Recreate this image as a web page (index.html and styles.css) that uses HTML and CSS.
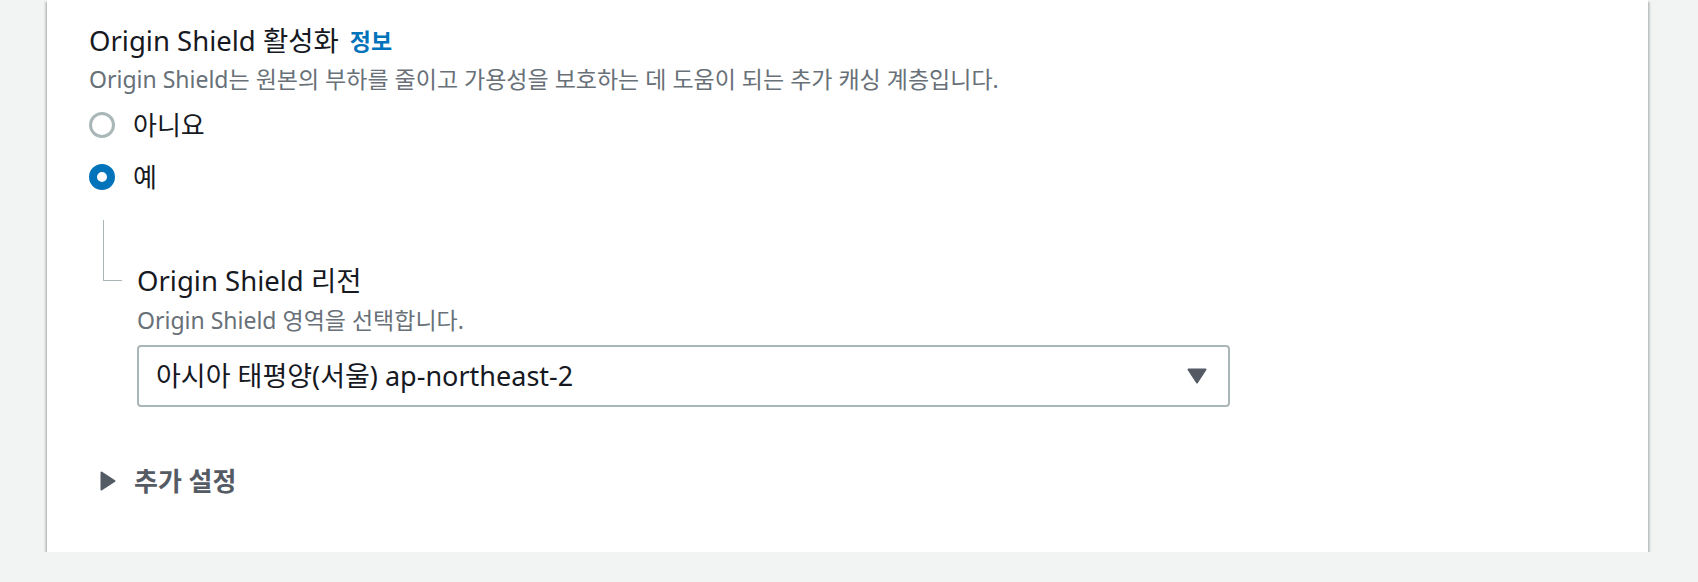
FILE: index.html
```html
<!DOCTYPE html>
<html lang="ko">
<head>
<meta charset="utf-8">
<title>Origin Shield</title>
<link rel="stylesheet" href="styles.css">
</head>
<body>
<div class="card">
  <div class="field-title">
    <span class="label">Origin Shield 활성화</span>
    <a class="info" href="#">정보</a>
  </div>
  <div class="desc">Origin Shield는 원본의 부하를 줄이고 가용성을 보호하는 데 도움이 되는 추가 캐싱 계층입니다.</div>
  <div class="radios">
    <label class="radio-row"><span class="radio"></span><span class="radio-text">아니요</span></label>
    <label class="radio-row"><span class="radio checked"></span><span class="radio-text">예</span></label>
  </div>
  <div class="nested">
    <div class="connector"></div>
    <div class="nested-body">
      <div class="label">Origin Shield 리전</div>
      <div class="desc">Origin Shield 영역을 선택합니다.</div>
      <div class="select">
        <span class="select-text">아시아 태평양(서울) ap-northeast-2</span>
        <svg class="caret" width="20" height="16" viewBox="0 0 20 16"><polygon points="1.5,1.5 18.5,1.5 10,14.5" fill="#545b64" stroke="#545b64" stroke-width="2" stroke-linejoin="round"/></svg>
      </div>
    </div>
  </div>
  <div class="expander">
    <svg class="exp-caret" width="16" height="20" viewBox="0 0 16 20"><polygon points="1.5,1.5 14.5,10 1.5,18.5" fill="#545b64" stroke="#545b64" stroke-width="2" stroke-linejoin="round"/></svg>
    <span class="exp-text">추가 설정</span>
  </div>
</div>
</body>
</html>
```
FILE: styles.css
```css
html, body {
  margin: 0;
  padding: 0;
  background: #f2f3f3;
}
body {
  font-family: "Noto Sans", "Noto Sans CJK KR", sans-serif;
  color: #16191f;
}
.card {
  margin-left: 47px;
  width: 1601px;
  box-sizing: border-box;
  background: #ffffff;
  padding: 25px 42px 55px 42px;
  box-shadow: 0 2px 2px 0 rgba(0, 28, 36, 0.3), 2px 2px 2px 0 rgba(0, 28, 36, 0.15), -2px 2px 2px 0 rgba(0, 28, 36, 0.15);
}
.field-title {
  display: flex;
  align-items: center;
  gap: 11px;
  height: 32px;
}
.label {
  font-size: 27.5px;
  line-height: 32px;
  color: #16191f;
}
.info {
  font-size: 23px;
  font-weight: 700;
  color: #0073bb;
  text-decoration: none;
  line-height: 32px;
}
.desc {
  font-size: 23px;
  line-height: 28px;
  color: #687078;
  margin-top: 8px;
}
.radios {
  display: flex;
  flex-direction: column;
  gap: 12px;
  margin-top: 12px;
}
.radio-row {
  display: flex;
  align-items: center;
  height: 40px;
  gap: 18px;
}
.radio {
  width: 26px;
  height: 26px;
  box-sizing: border-box;
  border-radius: 50%;
  border: 3px solid #aab7b8;
  background: #ffffff;
}
.radio.checked {
  border: 8px solid #0073bb;
}
.radio-text {
  font-size: 26px;
  line-height: 32px;
}
.nested {
  display: flex;
  align-items: flex-start;
  margin-top: 23px;
}
.connector {
  margin-left: 14px;
  width: 19px;
  height: 61px;
  box-sizing: border-box;
  border-left: 1.5px solid #aab7b8;
  border-bottom: 1.5px solid #aab7b8;
}
.nested-body {
  margin-left: 15px;
  padding-top: 45px;
  display: flex;
  flex-direction: column;
}
.nested-body .desc {
  margin-top: 9px;
}
.select {
  margin-top: 11px;
  width: 1093px;
  height: 62px;
  box-sizing: border-box;
  border: 2px solid #aab7b8;
  border-radius: 4px;
  display: flex;
  align-items: center;
  justify-content: space-between;
  padding: 0 21px 0 17px;
}
.select-text {
  font-size: 27px;
  line-height: 32px;
  color: #16191f;
}
.caret {
  display: block;
}
.expander {
  display: flex;
  align-items: center;
  gap: 18px;
  margin-top: 58px;
  margin-left: 11px;
  height: 32px;
}
.exp-caret {
  display: block;
}
.exp-text {
  font-size: 26px;
  font-weight: 700;
  color: #545b64;
  line-height: 32px;
}
```
